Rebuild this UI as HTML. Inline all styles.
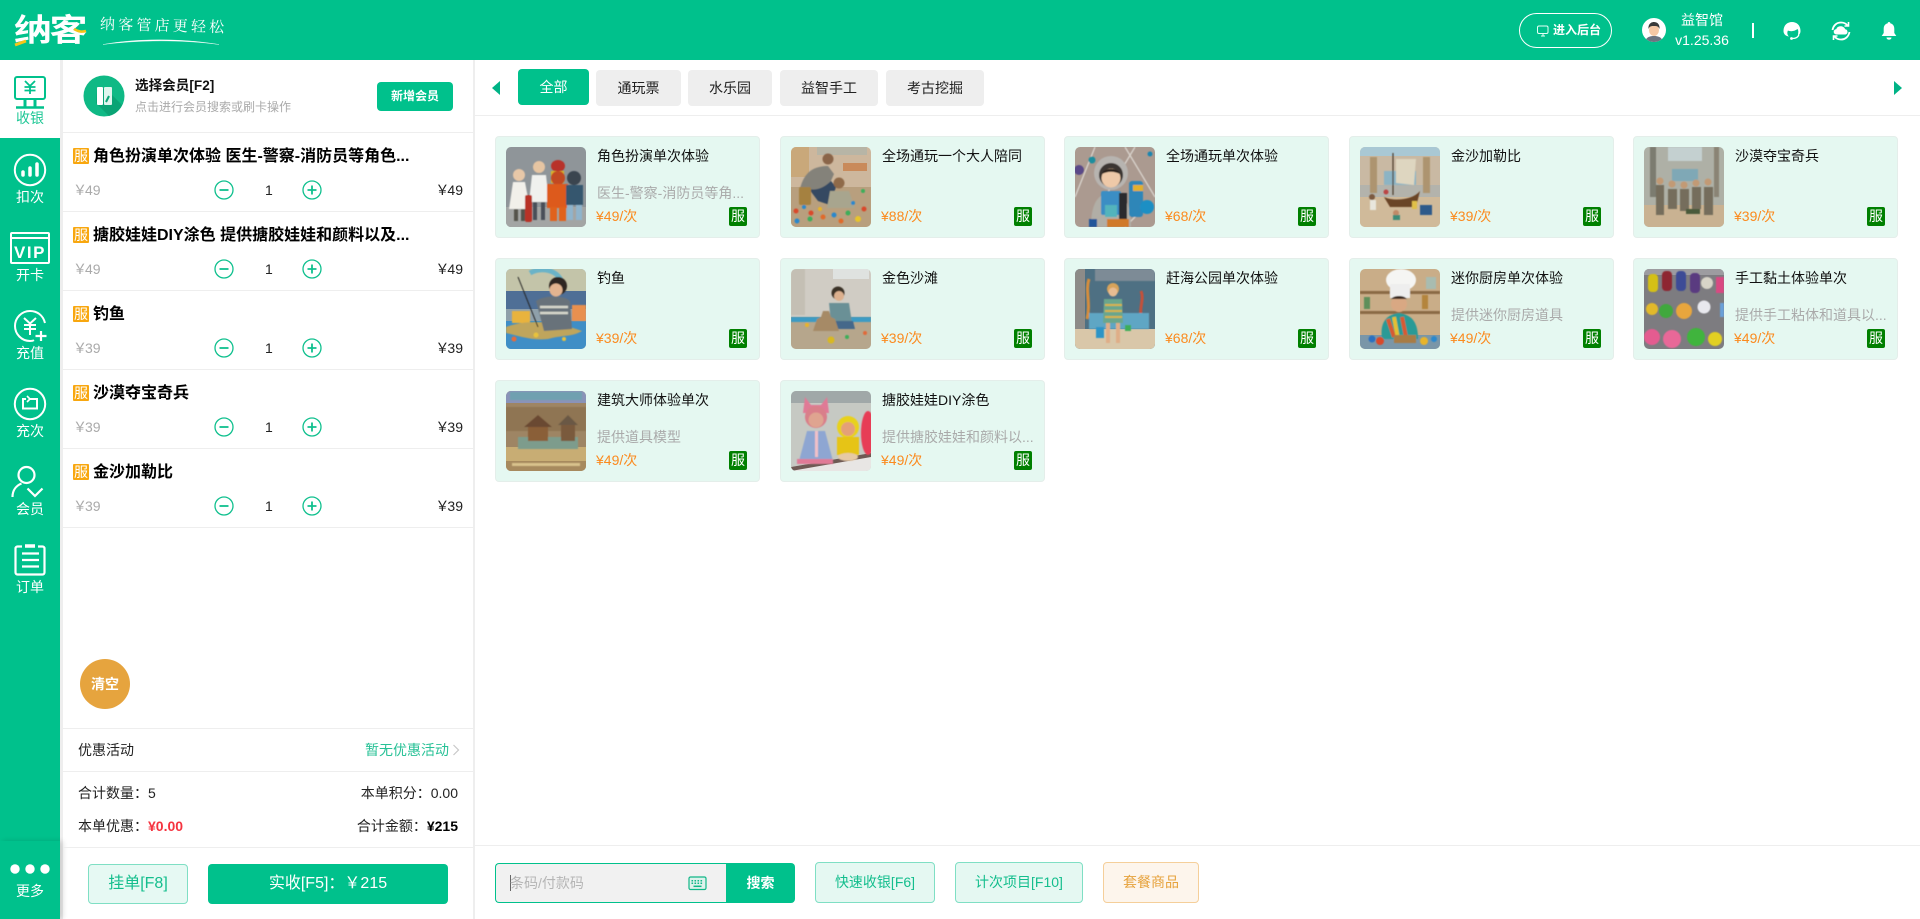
<!DOCTYPE html>
<html lang="zh"><head><meta charset="utf-8"><title>纳客</title>
<style>
*{box-sizing:border-box}
html,body{margin:0;padding:0;width:1920px;height:919px;overflow:hidden;background:#fff;font-family:"Liberation Sans","Noto Sans CJK SC",sans-serif;color:#111}
.a{position:absolute;white-space:nowrap;line-height:20px;height:20px}
.box{position:absolute}
.nav{position:absolute;left:0;width:60px;text-align:center;color:#fff;font-size:14px;line-height:20px;height:20px}
.tag{position:absolute;left:73px;width:16px;height:16px;background:#f8a70f;color:#fff;font-size:14px;line-height:16px;text-align:center;border-radius:1px;overflow:hidden}
.tt{position:absolute;left:93px;font-size:16px;font-weight:700;line-height:22px;height:22px;color:#000;white-space:nowrap}
.gp{position:absolute;left:73px;font-size:14px;color:#aaa;line-height:20px}
.gp s,.rp s{text-decoration:none;margin-right:-2px}
.n{position:absolute;left:265px;font-size:14px;line-height:20px;color:#222}
.rp{position:absolute;right:1457px;font-size:14px;line-height:20px;color:#222;white-space:nowrap}
.ln{position:absolute;left:63px;width:410px;height:1px;background:#eee}
.card{position:absolute;width:265px;height:102px;background:#e5f8f1;border:1px solid #e4eeea;border-radius:4px}
.card svg{position:absolute;left:10px;top:10px;width:80px;height:80px;border-radius:5px}
.card b{position:absolute;font-weight:400;left:101px;top:9px;font-size:14px;line-height:20px;color:#111;white-space:nowrap}
.card i{position:absolute;font-style:normal;left:101px;top:46px;font-size:14px;line-height:20px;color:#aaa;white-space:nowrap}
.card em{position:absolute;font-style:normal;left:100px;top:69px;font-size:14px;line-height:20px;color:#fb8a1e;white-space:nowrap}
.card u{position:absolute;text-decoration:none;left:233px;top:70px;width:18px;height:19px;background:#008000;color:#fff;font-size:14px;line-height:19px;text-align:center;border-radius:2px}
.tab{position:absolute;top:70px;height:36px;background:#eee;border-radius:4px;font-size:14px;line-height:36px;text-align:center;color:#222}
.btn{position:absolute;border-radius:4px;text-align:center;white-space:nowrap}
</style></head><body>
<svg width="0" height="0" style="position:absolute"><defs><filter id="b" x="-5%" y="-5%" width="110%" height="110%"><feGaussianBlur stdDeviation=".45"/></filter></defs></svg>

<!-- header -->
<div class="box" style="left:0;top:0;width:1920px;height:60px;background:#00c18c"></div>
<div class="a" style="left:14px;top:13px;height:36px;line-height:36px;font-size:38px;font-weight:700;color:#fff;letter-spacing:-2.500px;transform:scaleY(.82);transform-origin:50% 50%">纳客</div>
<svg class="box" style="left:14px;top:26px" width="74" height="22" viewBox="0 0 74 22"><path d="M1 19 L12 15" stroke="#f5c518" stroke-width="3"/><path d="M60 3 C65 6 68 6 72 5" stroke="#f5c518" stroke-width="2.500" fill="none"/></svg>
<div class="a" style="left:100px;top:14px;font-size:15px;line-height:22px;height:22px;color:#fff;font-family:'Liberation Serif','Noto Serif CJK SC',serif;letter-spacing:3.200px;transform:rotate(1.500deg);transform-origin:0 50%">纳客管店更轻松</div>
<svg class="box" style="left:100px;top:37px" width="124" height="10" viewBox="0 0 124 10"><path d="M3 7.500 C35 1.500 80 1 119 7.500 C80 2.500 40 3 3 7.500Z" fill="#fff" stroke="#fff" stroke-width=".3"/></svg>

<div class="box" style="left:1519px;top:13px;width:93px;height:35px;border:1px solid #fff;border-radius:18px"></div>
<svg class="box" style="left:1536px;top:24px" width="14" height="14" viewBox="0 0 14 14" fill="none" stroke="#e6fff6"><rect x="1.500" y="2" width="10.500" height="7.500" rx="1.500"/><path d="M5 12h4M7 10v2"/></svg>
<div class="a" style="left:1553px;top:20px;font-size:12px;font-weight:700;color:#fff">进入后台</div>
<svg class="box" style="left:1642px;top:18px" width="24" height="24" viewBox="0 0 24 24"><circle cx="12" cy="12" r="12" fill="#fff"/><clipPath id="av"><circle cx="12" cy="12" r="12"/></clipPath><g clip-path="url(#av)"><path d="M3 24c1-5 5-6 9-6s8 1 9 6z" fill="#6c7380"/><ellipse cx="12" cy="12" rx="5" ry="6" fill="#f6c8a5"/><path d="M6.500 11c-.5-5 2.500-7 5.500-7s6 2 5.500 7c-1-2.500-2-3-5.500-3s-4.500.5-5.500 3z" fill="#3a3a3a"/></g></svg>
<div class="a" style="left:1662px;width:80px;text-align:center;top:10px;font-size:14px;color:#fff">益智馆</div>
<div class="a" style="left:1662px;width:80px;text-align:center;top:30px;font-size:14px;color:#fff">v1.25.36</div>
<div class="box" style="left:1752px;top:23px;width:2px;height:15px;background:#fff"></div>
<svg class="box" style="left:1782px;top:21px" width="20" height="20" viewBox="0 0 20 20"><path d="M1.500 10C1.500 4 5.500 1 10 1s8.500 3 8.500 9c0 1.500-.5 3-1.500 3.500h-1c.5-3 .5-4-.5-5.500C13 10 9 11 6 9.500 5 11 5 14 7 15.500 3.500 15 1.500 13 1.500 10z" fill="#fff"/><path d="M17 13.500C16 16.500 13 17.500 10.500 17.500" stroke="#fff" stroke-width="1.300" fill="none"/><circle cx="9.500" cy="17.500" r="1.400" fill="#fff"/></svg>
<svg class="box" style="left:1831px;top:21px" width="20" height="20" viewBox="0 0 20 20" fill="none" stroke="#fff" stroke-width="1.800"><path d="M1.500 9C2.500 4 6 1.500 10 1.500c2.700 0 5 1 6.500 3M18.500 11c-1 5-4.500 7.500-8.500 7.500-2.700 0-5-1-6.500-3"/><path d="M13.500 5h4V1M6.500 15h-4v4" stroke-width="1.600"/><path d="M5.500 13.500a2.700 2.700 0 0 1-.2-5.400C6 6 7.800 5.200 9.800 5.200c2 0 3.700 1.200 4.400 3a2.700 2.700 0 0 1 .2 5.300z" fill="#fff" stroke="none"/></svg>
<svg class="box" style="left:1880px;top:21px" width="18" height="20" viewBox="0 0 18 20"><path d="M9 1c.9 0 1.300.6 1.300 1.300C13 3 14.300 5 14.300 8v4l2 3H1.700l2-3V8c0-3 1.300-5 4-5.700C7.700 1.600 8.100 1 9 1z" fill="#fff"/><path d="M6.500 16.500h5c0 1.300-1 2.200-2.500 2.200s-2.500-.9-2.500-2.200z" fill="#fff"/></svg>

<!-- sidebar -->
<div class="box" style="left:0;top:60px;width:60px;height:859px;background:#00c18c"></div>
<div class="box" style="left:0;top:60px;width:60px;height:78px;background:#fff"></div>
<div class="box" style="left:60px;top:60px;width:3px;height:859px;background:#eee"></div>
<div class="box" style="left:473px;top:60px;width:2px;height:859px;background:#eee"></div>

<svg class="box" style="left:13px;top:75px" width="34" height="34" viewBox="0 0 34 34" fill="none" stroke="#00c18c" stroke-width="2"><rect x="2" y="2" width="30" height="22" rx="2"/><path d="M12 6l5 5 5-5M11.500 12h11M11.500 15.500h11M17 11v8" stroke-width="1.800"/><path d="M3 32.500h28" stroke-width="2.500"/><path d="M12 25v7M22 25v7" stroke-width="3"/></svg>
<div class="nav" style="top:108px;color:#1dc795">收银</div>

<svg class="box" style="left:13px;top:153px" width="34" height="34" viewBox="0 0 34 34" fill="none" stroke="#fff"><circle cx="17" cy="17" r="15.200" stroke-width="2"/><path d="M10 22v-3M17 22v-7M24 22V11" stroke-width="3.500" stroke-linecap="round"/></svg>
<div class="nav" style="top:187px">扣次</div>

<svg class="box" style="left:9px;top:231px" width="42" height="34" viewBox="0 0 42 34" fill="none" stroke="#fff" stroke-width="2"><rect x="2" y="2" width="38" height="30" rx="1"/><path d="M2 7h38"/><text x="21" y="27" text-anchor="middle" font-size="17" font-weight="700" font-family="Liberation Sans" fill="#fff" stroke="none" letter-spacing="1.500">VIP</text></svg>
<div class="nav" style="top:265px">开卡</div>

<svg class="box" style="left:13px;top:309px" width="36" height="34" viewBox="0 0 36 34" fill="none" stroke="#fff" stroke-width="2"><path d="M32 14C30 6 24 2 17 2 8.500 2 2 9 2 17s6.500 15 15 15c2 0 3-.2 4-.8"/><path d="M11 9l6 5.500L23 9M11 16h12M11 20h12M17 14v12" stroke-width="2"/><path d="M22.500 27h11M28 22v10" stroke-width="2.200"/></svg>
<div class="nav" style="top:343px">充值</div>

<svg class="box" style="left:13px;top:387px" width="34" height="34" viewBox="0 0 34 34" fill="none" stroke="#fff" stroke-width="2"><circle cx="17" cy="17" r="15.200"/><path d="M13 12h-3v9.500h14V12h-7" stroke-width="2"/><path d="M14 9l3 3-3 3" stroke-width="1.600"/></svg>
<div class="nav" style="top:421px">充次</div>

<svg class="box" style="left:11px;top:465px" width="36" height="34" viewBox="0 0 36 34" fill="none" stroke="#fff" stroke-width="2.200"><circle cx="15.500" cy="10" r="8"/><path d="M1.500 32c0-7 4-11.500 9-13.500M16.500 23.500l7.500 7.500 7.500-7.500"/></svg>
<div class="nav" style="top:499px">会员</div>

<svg class="box" style="left:13px;top:543px" width="34" height="34" viewBox="0 0 34 34" fill="none" stroke="#fff" stroke-width="2.200"><path d="M9 3.500H4.500A2 2 0 0 0 2.500 5.500v24a2 2 0 0 0 2 2h25a2 2 0 0 0 2-2v-24a2 2 0 0 0-2-2H25"/><path d="M12 3h10" stroke-width="3.500"/><path d="M9 10.500h17M9 17h17M9 23.500h17"/></svg>
<div class="nav" style="top:577px">订单</div>

<div class="box" style="left:0;top:841px;width:60px;height:78px;background:#00c18c;box-shadow:3px 0 5px rgba(0,0,0,.14)"></div>
<svg class="box" style="left:0;top:860px" width="60" height="18"><circle cx="15" cy="9" r="4.700" fill="#fff"/><circle cx="30" cy="9" r="4.700" fill="#fff"/><circle cx="45" cy="9" r="4.700" fill="#fff"/></svg>
<div class="nav" style="top:881px">更多</div>

<!-- member -->
<svg class="box" style="left:83px;top:75px" width="42" height="42" viewBox="0 0 42 42"><circle cx="21" cy="21" r="20.500" fill="#0fb985"/><path d="M14 14h9l16 16A20 20 0 0 1 26 41L13 28z" fill="#0aa475"/><rect x="14" y="12" width="6" height="18" rx="1" fill="#fff"/><rect x="21" y="12" width="8" height="18" rx="1" fill="#dff5ee"/><path d="M23 27l3-6" stroke="#0aa475" stroke-width="2"/></svg>
<div class="a" style="left:135px;top:76px;font-size:13.600px;font-weight:700;color:#111">选择会员[F2]</div>
<div class="a" style="left:135px;top:97px;font-size:12px;color:#aaa">点击进行会员搜索或刷卡操作</div>
<div class="btn" style="left:377px;top:82px;width:76px;height:29px;background:#00c18c;color:#fff;font-size:12px;font-weight:700;line-height:29px">新增会员</div>
<div class="ln" style="top:132px"></div>

<!-- cart rows -->
<div class="tag" style="top:148px">服</div><div class="tt" style="top:146px">角色扮演单次体验 医生-警察-消防员等角色...</div>
<div class="gp" style="top:180px"><s>￥</s>49</div><svg class="box" style="left:214px;top:180px" width="20" height="20" viewBox="0 0 20 20" fill="none" stroke="#10c08e"><circle cx="10" cy="10" r="9" stroke-width="1.300"/><path d="M5.500 10h9" stroke-width="1.800"/></svg><div class="n" style="top:180px">1</div><svg class="box" style="left:302px;top:180px" width="20" height="20" viewBox="0 0 20 20" fill="none" stroke="#10c08e"><circle cx="10" cy="10" r="9" stroke-width="1.300"/><path d="M5.500 10h9M10 5.500v9" stroke-width="1.800"/></svg><div class="rp" style="top:180px"><s>￥</s>49</div>
<div class="ln" style="top:211px"></div>

<div class="tag" style="top:227px">服</div><div class="tt" style="top:225px">搪胶娃娃DIY涂色 提供搪胶娃娃和颜料以及...</div>
<div class="gp" style="top:259px"><s>￥</s>49</div><svg class="box" style="left:214px;top:259px" width="20" height="20" viewBox="0 0 20 20" fill="none" stroke="#10c08e"><circle cx="10" cy="10" r="9" stroke-width="1.300"/><path d="M5.500 10h9" stroke-width="1.800"/></svg><div class="n" style="top:259px">1</div><svg class="box" style="left:302px;top:259px" width="20" height="20" viewBox="0 0 20 20" fill="none" stroke="#10c08e"><circle cx="10" cy="10" r="9" stroke-width="1.300"/><path d="M5.500 10h9M10 5.500v9" stroke-width="1.800"/></svg><div class="rp" style="top:259px"><s>￥</s>49</div>
<div class="ln" style="top:290px"></div>

<div class="tag" style="top:306px">服</div><div class="tt" style="top:304px">钓鱼</div>
<div class="gp" style="top:338px"><s>￥</s>39</div><svg class="box" style="left:214px;top:338px" width="20" height="20" viewBox="0 0 20 20" fill="none" stroke="#10c08e"><circle cx="10" cy="10" r="9" stroke-width="1.300"/><path d="M5.500 10h9" stroke-width="1.800"/></svg><div class="n" style="top:338px">1</div><svg class="box" style="left:302px;top:338px" width="20" height="20" viewBox="0 0 20 20" fill="none" stroke="#10c08e"><circle cx="10" cy="10" r="9" stroke-width="1.300"/><path d="M5.500 10h9M10 5.500v9" stroke-width="1.800"/></svg><div class="rp" style="top:338px"><s>￥</s>39</div>
<div class="ln" style="top:369px"></div>

<div class="tag" style="top:385px">服</div><div class="tt" style="top:383px">沙漠夺宝奇兵</div>
<div class="gp" style="top:417px"><s>￥</s>39</div><svg class="box" style="left:214px;top:417px" width="20" height="20" viewBox="0 0 20 20" fill="none" stroke="#10c08e"><circle cx="10" cy="10" r="9" stroke-width="1.300"/><path d="M5.500 10h9" stroke-width="1.800"/></svg><div class="n" style="top:417px">1</div><svg class="box" style="left:302px;top:417px" width="20" height="20" viewBox="0 0 20 20" fill="none" stroke="#10c08e"><circle cx="10" cy="10" r="9" stroke-width="1.300"/><path d="M5.500 10h9M10 5.500v9" stroke-width="1.800"/></svg><div class="rp" style="top:417px"><s>￥</s>39</div>
<div class="ln" style="top:448px"></div>

<div class="tag" style="top:464px">服</div><div class="tt" style="top:462px">金沙加勒比</div>
<div class="gp" style="top:496px"><s>￥</s>39</div><svg class="box" style="left:214px;top:496px" width="20" height="20" viewBox="0 0 20 20" fill="none" stroke="#10c08e"><circle cx="10" cy="10" r="9" stroke-width="1.300"/><path d="M5.500 10h9" stroke-width="1.800"/></svg><div class="n" style="top:496px">1</div><svg class="box" style="left:302px;top:496px" width="20" height="20" viewBox="0 0 20 20" fill="none" stroke="#10c08e"><circle cx="10" cy="10" r="9" stroke-width="1.300"/><path d="M5.500 10h9M10 5.500v9" stroke-width="1.800"/></svg><div class="rp" style="top:496px"><s>￥</s>39</div>
<div class="ln" style="top:527px"></div>

<div class="box" style="left:80px;top:659px;width:50px;height:50px;border-radius:50%;background:#e6a43e;color:#fff;font-size:14px;font-weight:700;line-height:50px;text-align:center">清空</div>
<div class="ln" style="top:728px"></div>
<div class="a" style="left:78px;top:740px;font-size:14px;color:#222">优惠活动</div>
<div class="a" style="left:365px;top:740px;font-size:14px;color:#27c196">暂无优惠活动</div>
<svg class="box" style="left:452px;top:744px" width="8" height="12" viewBox="0 0 8 12" fill="none" stroke="#c8c8c8" stroke-width="1.200"><path d="M1.500 1l5 5-5 5"/></svg>
<div class="ln" style="top:771px"></div>
<div class="a" style="left:78px;top:783px;font-size:14px;color:#222">合计数量：5</div>
<div class="a" style="right:1462px;top:783px;font-size:14px;color:#222">本单积分：0.00</div>
<div class="a" style="left:78px;top:816px;font-size:14px;color:#222">本单优惠：<span style="color:#f5333f;font-weight:700">¥0.00</span></div>
<div class="a" style="right:1462px;top:816px;font-size:14px;color:#222">合计金额：<span style="color:#000;font-weight:700">¥215</span></div>
<div class="ln" style="top:847px"></div>
<div class="btn" style="left:88px;top:864px;width:100px;height:40px;background:#e6f9f3;border:1px solid #7fdfc4;color:#14be8d;font-size:16px;line-height:38px">挂单[F8]</div>
<div class="btn" style="left:208px;top:864px;width:240px;height:40px;background:#00c18c;color:#fff;font-size:16px;line-height:40px">实收[F5]：￥215</div>

<!-- tabs -->
<svg class="box" style="left:491px;top:80px" width="10" height="16" viewBox="0 0 10 16"><path d="M9 1v14L1 8z" fill="#00b386"/></svg>
<div class="tab" style="left:518px;top:69px;width:71px;background:#00c18c;color:#fff">全部</div>
<div class="tab" style="left:596px;width:85px">通玩票</div>
<div class="tab" style="left:688px;width:84px">水乐园</div>
<div class="tab" style="left:780px;width:98px">益智手工</div>
<div class="tab" style="left:886px;width:98px">考古挖掘</div>
<svg class="box" style="left:1893px;top:80px" width="10" height="16" viewBox="0 0 10 16"><path d="M1 1v14l8-7z" fill="#00b386"/></svg>
<div class="box" style="left:475px;top:115px;width:1445px;height:1px;background:#eee"></div>

<!-- cards -->
<div class="card" style="left:495px;top:136px"><svg viewBox="0 0 80 80" preserveAspectRatio="none"><rect width="80" height="80" fill="#8f9599"/><rect y="60" width="80" height="20" fill="#a3a5a4"/><g filter="url(#b)"><circle cx="13" cy="28" r="6" fill="#e8c8a8"/><path d="M3 62 L7 35h12l5 27z" fill="#f2f0ea"/><rect x="8" y="62" width="4" height="12" fill="#54524c"/><rect x="15" y="62" width="4" height="12" fill="#54524c"/><circle cx="33" cy="20" r="6" fill="#e6c5a2"/><path d="M23 55 L26 28h14l3 27z" fill="#f0f1ee"/><rect x="27" y="55" width="4" height="18" fill="#4a5058"/><rect x="35" y="55" width="4" height="18" fill="#4a5058"/><rect x="19" y="48" width="7" height="27" rx="2" fill="#b83226"/><ellipse cx="52" cy="19" rx="7" ry="6" fill="#b8322a"/><rect x="45" y="24" width="13" height="12" fill="#dcb225"/><circle cx="52" cy="31" r="7" fill="#c24a20"/><rect x="41" y="37" width="21" height="24" fill="#dd5a1c"/><rect x="44" y="60" width="7" height="14" fill="#e0621e"/><rect x="53" y="60" width="7" height="14" fill="#e0621e"/><circle cx="68" cy="31" r="7" fill="#3a4450"/><rect x="60" y="38" width="17" height="20" fill="#36566e"/><rect x="61" y="58" width="6" height="15" fill="#8fb4cc"/><rect x="70" y="58" width="6" height="15" fill="#8fb4cc"/></g></svg><b>角色扮演单次体验</b><i>医生-警察-消防员等角...</i><em>¥49/次</em><u>服</u></div>

<div class="card" style="left:780px;top:136px"><svg viewBox="0 0 80 80" preserveAspectRatio="none"><rect width="80" height="80" fill="#cdb79d"/><rect y="40" width="80" height="40" fill="#b89f7e"/><rect width="18" height="30" fill="#c9a87a"/><rect x="26" width="50" height="8" fill="#b7b5a6"/><rect x="52" y="16" width="24" height="8" fill="#c98a5a"/><g filter="url(#b)"><circle cx="37" cy="12" r="5.500" fill="#8a6548"/><path d="M9 42C13 24 24 19 37 19l6 8-7 16H14z" fill="#84827a"/><path d="M18 42c8 2 16-2 22-8l5 6-6 18-12-4z" fill="#344a62"/><rect x="8" y="40" width="12" height="18" rx="2" fill="#a5813f"/><circle cx="48" cy="36" r="5.500" fill="#8f6a4a"/><path d="M39 44h19l6 17H36z" fill="#a8a58e"/><circle cx="5" cy="64" r="2.500" fill="#d9482b"/><circle cx="13" cy="60" r="2" fill="#2b88cc"/><circle cx="20" cy="66" r="2.500" fill="#d9482b"/><circle cx="29" cy="62" r="2" fill="#e8b42a"/><circle cx="19" cy="72" r="2.500" fill="#3cae5a"/><circle cx="32" cy="70" r="2.500" fill="#e06a2a"/><circle cx="43" cy="68" r="2.500" fill="#2b88cc"/><circle cx="50" cy="74" r="2.500" fill="#e06a2a"/><circle cx="57" cy="66" r="2.500" fill="#3cae5a"/><circle cx="67" cy="72" r="3" fill="#e8c42a"/><circle cx="73" cy="62" r="2.500" fill="#d9482b"/><circle cx="62" cy="56" r="2" fill="#2b88cc"/><circle cx="72" cy="44" r="2" fill="#3cae5a"/><circle cx="6" cy="74" r="2.500" fill="#2b88cc"/></g></svg><b>全场通玩一个大人陪同</b><em>¥88/次</em><u>服</u></div>

<div class="card" style="left:1064px;top:136px"><svg viewBox="0 0 80 80" preserveAspectRatio="none"><rect width="80" height="80" fill="#ab9a90"/><g filter="url(#b)"><path d="M50 0l30 50M60 0L30 50M70 60L50 80M0 50L20 0" stroke="#d9d3cc" stroke-width="1.300" fill="none"/><circle cx="4" cy="23" r="5" fill="#5a4a88"/><circle cx="17" cy="13" r="3.500" fill="#1e8e9e"/><circle cx="75" cy="7" r="2.500" fill="#1e86b0"/><circle cx="36" cy="26" r="17" fill="#b7b4b0"/><circle cx="36" cy="28" r="12" fill="#3a3430"/><circle cx="36" cy="31" r="9.500" fill="#eec9a8"/><path d="M27 27c2-7 16-7 18 0-6-3-12-3-18 0z" fill="#2a241e"/><path d="M16 80c0-22 6-34 20-34s20 12 20 34z" fill="#b1aea6"/><rect x="26" y="44" width="20" height="24" rx="2" fill="#3a8ec4"/><rect x="30" y="58" width="12" height="12" fill="#53b4bc"/><rect x="44" y="46" width="8" height="30" fill="#2a2a2e"/><rect x="54" y="34" width="14" height="36" rx="3" fill="#2d86b8"/><circle cx="72" cy="60" r="7" fill="#1f8fc4"/><rect x="58" y="38" width="10" height="6" fill="#e2b02e"/><rect x="32" y="72" width="22" height="8" fill="#d07a2c"/><rect x="14" y="72" width="8" height="8" fill="#24579a"/></g></svg><b>全场通玩单次体验</b><em>¥68/次</em><u>服</u></div>

<div class="card" style="left:1349px;top:136px"><svg viewBox="0 0 80 80" preserveAspectRatio="none"><rect width="80" height="80" fill="#c9b9a3"/><rect width="80" height="9" fill="#a9c8d4"/><rect y="50" width="80" height="30" fill="#d0ba9a"/><rect y="38" width="80" height="12" fill="#b3b3ac"/><g filter="url(#b)"><rect x="10" y="10" width="7" height="36" fill="#ad9470"/><rect x="63" y="10" width="7" height="36" fill="#ad9470"/><rect x="24" y="24" width="32" height="14" fill="#8cb4c4"/><path d="M33 6v42" stroke="#4a3a2a" stroke-width="1.200"/><path d="M36 12h20l-2 26-18-2z" fill="#ded6c0"/><path d="M24 50c8 4 28 4 36-6l-4 16H30z" fill="#6a4428"/><circle cx="12" cy="50" r="3" fill="#7c5a40"/><rect x="10" y="53" width="6" height="10" fill="#e8e6dc"/><circle cx="36" cy="66" r="3" fill="#c08a68"/><rect x="33" y="68" width="7" height="5" fill="#3e8c78"/><rect x="60" y="58" width="12" height="10" fill="#2e5a8a"/><rect x="52" y="54" width="5" height="8" fill="#e0c04a"/><circle cx="26" cy="45" r="2.500" fill="#b44"/></g></svg><b>金沙加勒比</b><em>¥39/次</em><u>服</u></div>

<div class="card" style="left:1633px;top:136px"><svg viewBox="0 0 80 80" preserveAspectRatio="none"><rect width="80" height="80" fill="#aeb0a6"/><rect y="58" width="80" height="22" fill="#c9b292"/><g filter="url(#b)"><rect x="6" width="6" height="50" fill="#7c7c70"/><rect x="70" width="5" height="50" fill="#8a8474"/><rect x="24" y="0" width="34" height="14" fill="#c4d0d0"/><rect x="28" y="22" width="26" height="12" fill="#7fa8b6"/><g fill="#756d5c"><rect x="12" y="38" width="8" height="30"/><rect x="24" y="42" width="9" height="20"/><rect x="36" y="42" width="9" height="22"/><rect x="48" y="40" width="9" height="22"/><rect x="60" y="40" width="9" height="28"/></g><g fill="#c29a74"><circle cx="16" cy="34" r="3.500"/><circle cx="28" cy="37" r="3.500"/><circle cx="40" cy="38" r="3.500"/><circle cx="52" cy="36" r="3.500"/><circle cx="64" cy="35" r="3.500"/></g><rect x="42" y="62" width="14" height="5" fill="#4a5a3a"/></g></svg><b>沙漠夺宝奇兵</b><em>¥39/次</em><u>服</u></div>

<div class="card" style="left:495px;top:258px"><svg viewBox="0 0 80 80" preserveAspectRatio="none"><rect width="80" height="80" fill="#8fa0aa"/><rect width="80" height="22" fill="#c3c4a9"/><rect y="22" width="80" height="18" fill="#4f6f96"/><rect y="52" width="80" height="28" fill="#3f8ec6"/><g filter="url(#b)"><path d="M24 4c10-6 28-4 32 10" stroke="#6ab3c8" stroke-width="5" fill="none"/><rect x="6" y="42" width="18" height="12" fill="#e8b33c"/><rect x="66" y="36" width="14" height="16" fill="#e89050"/><path d="M0 58c20-8 50-6 76 4-10 6-20 4-34 8-16 2-32-4-42-6z" fill="#bfa55c"/><circle cx="52" cy="17" r="9" fill="#2e2620"/><circle cx="50" cy="21" r="6.500" fill="#e3b490"/><path d="M30 32c8-6 28-6 34 0l2 28-28 2z" fill="#68727a"/><path d="M34 38h28M34 44h28" stroke="#d8d8cc" stroke-width="2.500"/><path d="M12 8l20 50" stroke="#222" stroke-width="1"/><circle cx="30" cy="66" r="2.500" fill="#e8c23a"/><circle cx="8" cy="70" r="2.500" fill="#e86a3a"/><circle cx="58" cy="70" r="2" fill="#e8c23a"/></g></svg><b>钓鱼</b><em>¥39/次</em><u>服</u></div>

<div class="card" style="left:780px;top:258px"><svg viewBox="0 0 80 80" preserveAspectRatio="none"><rect width="80" height="80" fill="#d0ccc4"/><rect x="42" width="36" height="10" fill="#dfe2e0"/><rect y="48" width="80" height="32" fill="#b6a68c"/><g filter="url(#b)"><rect x="0" width="14" height="46" fill="#c4bfb4"/><rect y="48" width="80" height="5" fill="#3d9bc4"/><circle cx="47" cy="24" r="6.500" fill="#3a3028"/><circle cx="48" cy="27" r="5" fill="#dcb08e"/><path d="M38 34h20l3 20H40z" fill="#6a9096"/><path d="M42 52h20l2 8H44z" fill="#45688a"/><path d="M22 62l4-12 4-2 2-6h6l2 6 4 2 4 12z" fill="#a68a66"/><circle cx="40" cy="71" r="3.500" fill="#d8b820"/><circle cx="16" cy="56" r="2" fill="#e8b42a"/><circle cx="74" cy="64" r="2" fill="#e06a3a"/><circle cx="56" cy="68" r="2" fill="#3cae5a"/></g></svg><b>金色沙滩</b><em>¥39/次</em><u>服</u></div>

<div class="card" style="left:1064px;top:258px"><svg viewBox="0 0 80 80" preserveAspectRatio="none"><rect width="80" height="80" fill="#4e7083"/><rect y="60" width="80" height="20" fill="#d9c7a9"/><rect x="0" width="10" height="60" fill="#8d8b88"/><g filter="url(#b)"><rect x="20" y="0" width="60" height="12" fill="#7d8b96"/><path d="M14 10c-4 12 2 24-2 40" stroke="#d78d3a" stroke-width="3" fill="none"/><path d="M66 22c4 10-4 18 2 32" stroke="#c4513a" stroke-width="3" fill="none"/><rect x="14" y="44" width="60" height="16" fill="#5fa6c4"/><circle cx="38" cy="20" r="6" fill="#d7a35a"/><circle cx="38" cy="23" r="4.500" fill="#e8bc92"/><path d="M29 30h18l1 24H28z" fill="#6aa68c"/><path d="M30 36h17M30 42h17M30 48h17" stroke="#d6b24a" stroke-width="2"/><rect x="31" y="54" width="4" height="20" fill="#dfae88"/><rect x="41" y="54" width="4" height="20" fill="#dfae88"/><rect x="21" y="58" width="8" height="11" fill="#2e94c6"/><rect x="50" y="56" width="6" height="6" fill="#3cae5a"/></g></svg><b>赶海公园单次体验</b><em>¥68/次</em><u>服</u></div>

<div class="card" style="left:1349px;top:258px"><svg viewBox="0 0 80 80" preserveAspectRatio="none"><rect width="80" height="80" fill="#c9ad88"/><rect y="66" width="80" height="14" fill="#7a96a8"/><g filter="url(#b)"><rect y="22" width="80" height="3" fill="#8a6a44"/><rect y="42" width="80" height="3" fill="#8a6a44"/><rect x="4" y="28" width="6" height="12" fill="#5e8f5a"/><rect x="62" y="26" width="6" height="14" fill="#b4853c"/><rect x="66" y="8" width="10" height="12" fill="#a8bcb0"/><ellipse cx="41" cy="11" rx="15" ry="11" fill="#f5f5f3"/><rect x="30" y="15" width="20" height="14" fill="#eee"/><circle cx="39" cy="35" r="8" fill="#d9a883"/><path d="M31 30c3-4 13-4 16 0z" fill="#3a2c20"/><path d="M22 70c-2-14 2-24 17-26 15 2 19 12 19 26z" fill="#299a96"/><path d="M28 50l6 18M42 48l4 20" stroke="#d85a30" stroke-width="4"/><path d="M34 48l4 22" stroke="#e4bf30" stroke-width="4"/><rect x="34" y="66" width="22" height="8" fill="#a87c44"/><circle cx="20" cy="72" r="4" fill="#d9482b"/><circle cx="12" cy="70" r="3.500" fill="#2b6fc0"/><circle cx="64" cy="72" r="4" fill="#e8b42a"/><circle cx="74" cy="70" r="3" fill="#2b88cc"/></g></svg><b>迷你厨房单次体验</b><i>提供迷你厨房道具</i><em>¥49/次</em><u>服</u></div>

<div class="card" style="left:1633px;top:258px"><svg viewBox="0 0 80 80" preserveAspectRatio="none"><rect width="80" height="80" fill="#7d7c80"/><rect y="0" width="80" height="6" fill="#9d9ca0"/><g filter="url(#b)"><rect x="4" y="5" width="10" height="18" rx="4" fill="#d4c018"/><rect x="18" y="2" width="10" height="20" rx="4" fill="#8e2630"/><rect x="32" y="2" width="10" height="20" rx="4" fill="#3c4c96"/><rect x="46" y="4" width="10" height="20" rx="4" fill="#5a3a80"/><circle cx="63" cy="14" r="6" fill="#d8d4c8"/><rect x="72" y="8" width="8" height="16" fill="#d94a82"/><circle cx="8" cy="40" r="6" fill="#e2b92c"/><circle cx="22" cy="42" r="7" fill="#3fa83c"/><circle cx="40" cy="42" r="8" fill="#e8a63c"/><circle cx="60" cy="38" r="6.500" fill="#e8e8ee"/><rect x="76" y="34" width="4" height="14" fill="#6aa0d8"/><circle cx="8" cy="68" r="8" fill="#e45c90"/><circle cx="28" cy="70" r="9" fill="#e86898"/><circle cx="52" cy="68" r="9" fill="#3fb43c"/><circle cx="71" cy="70" r="7" fill="#e2d020"/></g></svg><b>手工黏土体验单次</b><i>提供手工粘体和道具以...</i><em>¥49/次</em><u>服</u></div>

<div class="card" style="left:495px;top:380px"><svg viewBox="0 0 80 80" preserveAspectRatio="none"><rect width="80" height="80" fill="#9e8564"/><rect width="80" height="12" fill="#8a93b8"/><rect y="56" width="80" height="14" fill="#c8ad74"/><rect y="70" width="80" height="10" fill="#a78a5e"/><g filter="url(#b)"><rect x="4" y="1" width="72" height="8" fill="#70a0b0"/><rect x="0" y="16" width="80" height="24" fill="#8f7552"/><rect x="12" y="46" width="60" height="12" fill="#7d9c8c"/><path d="M18 36l14-12 14 12z" fill="#6b4a30"/><rect x="22" y="36" width="20" height="14" fill="#8a5e38"/><path d="M52 34l10-10 10 10z" fill="#6a5844"/><rect x="55" y="34" width="14" height="16" fill="#7a5a3c"/><rect x="6" y="72" width="68" height="3" fill="#d8c28c"/></g></svg><b>建筑大师体验单次</b><i>提供道具模型</i><em>¥49/次</em><u>服</u></div>

<div class="card" style="left:780px;top:380px"><svg viewBox="0 0 80 80" preserveAspectRatio="none"><rect width="80" height="80" fill="#c6c9c3"/><rect width="80" height="12" fill="#a0a8a8"/><path d="M0 80V76L80 62V80z" fill="#e8e6e4"/><path d="M0 76L80 62v4L0 80z" fill="#6e5a54"/><g filter="url(#b)"><path d="M14 6l6 8h10l6-8 2 16H12z" fill="#e07a96"/><circle cx="25" cy="26" r="11" fill="#d97f8a"/><circle cx="25" cy="29" r="7.500" fill="#dfa490"/><path d="M16 40h18l8 30H8z" fill="#8ea6d2"/><path d="M6 68h36v5H6z" fill="#e07a96"/><rect x="24" y="40" width="3" height="26" fill="#f0c0c8"/><circle cx="57" cy="36" r="11" fill="#e8d11e"/><circle cx="57" cy="38" r="7" fill="#e4a078"/><path d="M46 46h22v18H46z" fill="#e6c414"/><ellipse cx="57" cy="66" rx="10" ry="4" fill="#e6c9a4"/><ellipse cx="77" cy="42" rx="7" ry="22" fill="#e73e56"/></g></svg><b>搪胶娃娃DIY涂色</b><i>提供搪胶娃娃和颜料以...</i><em>¥49/次</em><u>服</u></div>

<!-- bottom bar -->
<div class="box" style="left:475px;top:845px;width:1445px;height:1px;background:#eee"></div>
<div class="box" style="left:495px;top:863px;width:231px;height:40px;background:#f1f1f1;border:1px solid #00c18c;border-right:0;border-radius:4px 0 0 4px"></div>
<div class="box" style="left:510px;top:875px;width:1px;height:16px;background:#666"></div>
<div class="a" style="left:510px;top:873px;font-size:14px;color:#b5b5b5">条码/付款码</div>
<svg class="box" style="left:688px;top:876px" width="19" height="15" viewBox="0 0 19 15" fill="none" stroke="#10b787" stroke-width="1.200"><rect x="1" y="1" width="17" height="12.500" rx="1.500" fill="#def2ec"/><path d="M3.500 4.800h12M3.500 7.300h12" stroke-dasharray="1.600 1.400" stroke-width="1.500"/><path d="M5.500 10.300h8" stroke-width="1.500"/></svg>
<div class="btn" style="left:726px;top:863px;width:69px;height:40px;background:#00c18c;color:#fff;border-radius:0 4px 4px 0;font-size:14px;font-weight:700;line-height:40px">搜索</div>
<div class="btn" style="left:815px;top:862px;width:120px;height:41px;background:#e5f8f2;border:1px solid #7fdfc4;color:#14be8d;font-size:14px;line-height:39px">快速收银[F6]</div>
<div class="btn" style="left:955px;top:862px;width:128px;height:41px;background:#e5f8f2;border:1px solid #7fdfc4;color:#14be8d;font-size:14px;line-height:39px">计次项目[F10]</div>
<div class="btn" style="left:1103px;top:862px;width:96px;height:41px;background:#fdf5ec;border:1px solid #f5cf9a;color:#e6a23c;font-size:14px;line-height:39px">套餐商品</div>
</body></html>
